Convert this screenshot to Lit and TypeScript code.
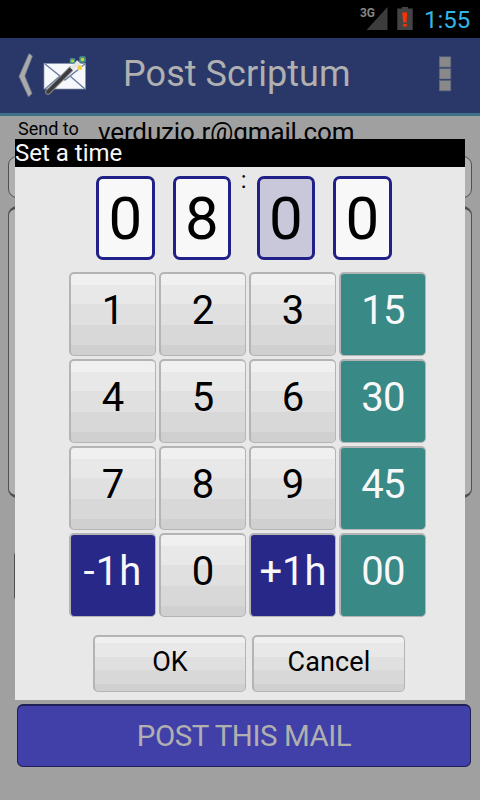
import { LitElement, html, css, svg } from "lit";
import { customElement, property } from "lit/decorators.js";

@customElement("status-bar")
class StatusBar extends LitElement {
  static styles = css`
    :host { display: flex; height: 38px; background: #000; justify-content: flex-end; }
    svg { display: block; width: 60px; height: 38px; }
    .net { font: 700 12.500px Roboto, sans-serif; fill: #868686; }
    .clock { width: 61px; box-sizing: border-box; padding-left: 5px; font: 24px/40px Roboto, sans-serif; color: #33b5e5; }
  `;
  render() {
    return html`
      <svg viewBox="359 0 60 38">
        <path d="M387.500 7V30H366.500Z" fill="#3c3c3c" />
        <text class="net" x="360" y="17" textLength="15" lengthAdjust="spacingAndGlyphs">3G</text>
        <path d="M397.300 8.500H402V7H408V8.500H412.700V30H397.300Z" fill="#444" />
        <path d="M402.300 12.500H407.200L406.400 22.500H403.200ZM403 24H406.700V26.500H403Z" fill="#ff3000" />
      </svg>
      <div class="clock">1:55</div>
    `;
  }
}

@customElement("title-bar")
class TitleBar extends LitElement {
  static styles = css`
    :host { display: flex; align-items: center; box-sizing: border-box; height: 78px; background: #293868; border-bottom: 3px solid #3e7087; padding: 0 28px 0 17px; }
    .logo { width: 74px; height: 60px; margin-top: -1px; flex: none; }
    .title { flex: 1; margin-left: 32px; font: 36px/73px Roboto, sans-serif; height: 75px; color: #b0b0b0; letter-spacing: .06px; white-space: nowrap; }
    .menu { width: 14px; height: 36px; margin-top: -4px; flex: none; }
  `;
  render() {
    return html`
      <svg class="logo" viewBox="17 45 74 60">
        <path d="M29 53.500L32.500 56L24.800 76L32 93.500L28.500 97L19 76.500Z" fill="#aaa" stroke="#6b7590" stroke-width=".7" />
        <rect x="44" y="63.500" width="41.500" height="25.500" fill="#f7f8fb" stroke="#8a94b0" stroke-width=".7" />
        <path d="M45 64L65 80L85 64M45 89L60 76M85 89L70 76" fill="none" stroke="#6b7da3" stroke-width="1.400" />
        <path d="M48 92L71 69" stroke="#8b8b8d" stroke-width="5.600" stroke-linecap="round" />
        <path d="M48 92L71 69" stroke="#3c3c3e" stroke-width="3.800" stroke-linecap="round" />
        <path d="M71.500 69L79 62" stroke="#e7e7e7" stroke-width="5" />
        ${[[72.5, 61, 2.2], [82.5, 59.5, 2.6], [79.8, 67.5, 1.9]].map(
          ([x, y, r], i) => svg`
            <path d="M${x - r} ${y - r}h${2 * r}v${2 * r}h${-2 * r}Z" fill=${i === 2 ? "#f3cb31" : "#348d7d"} stroke=${i === 2 ? "#e8d889" : "#539d9a"} />
            <circle cx=${x} cy=${y} r=${r * 0.7} fill=${i === 2 ? "#f5cf24" : "#c8cf31"} />`
        )}
      </svg>
      <div class="title">Post Scriptum</div>
      <svg class="menu" viewBox="0 0 14 36">
        <g fill="#898989" stroke="#596581" stroke-width=".7">
          <rect x="1.300" y=".8" width="11.500" height="10.300" />
          <rect x="1.300" y="12.700" width="11.500" height="10.300" />
          <rect x="1.300" y="24.600" width="11.500" height="10.300" />
        </g>
      </svg>
    `;
  }
}

@customElement("pad-key")
class PadKey extends LitElement {
  @property() label = "";
  @property({ reflect: true }) tone = "plain";
  static styles = css`
    :host { display: block; box-sizing: border-box; height: 84px; border: 1px solid #b4b4b4; border-width: 2px 1px 1px 2px; border-radius: 5px; text-align: center; font: 40px/74px Roboto, sans-serif; color: #000;
      background: linear-gradient(#f0f0f0 11px, #e8e8e8 11px 30px, #e0e0e0 30px 51px, #d8d8d8 51px 71px, #d0d0d0 71px); }
    :host([tone="teal"]) { background: #398987; color: #f8f8f8; letter-spacing: -.7px; }
    :host([tone="blue"]) { background: #282888; color: #f8f8f8; }
    :host([label="-1h"]) { letter-spacing: 1.100px; }
    :host([tone="action"]) { height: 57px; font-size: 27px; line-height: 50px; letter-spacing: .1px;
      background: linear-gradient(#f0f0f0 6px, #e8e8e8 6px 20px, #e0e0e0 20px 33px, #d8d8d8 33px 47px, #d0d0d0 47px); }
  `;
  render() {
    return html`${this.label}`;
  }
}

@customElement("time-dialog")
class TimeDialog extends LitElement {
  static styles = css`
    :host { display: block; width: 450px; height: 561px; background: #e8e8e8; }
    .caption { height: 28px; background: #000; color: #f8f8f8; font: 24px/28px Roboto, sans-serif; }
    .digits { display: flex; padding: 9px 0 0 81px; height: 96px; box-sizing: border-box; }
    .digit { box-sizing: border-box; width: 58.500px; height: 84px; border: 3px solid #202088; border-radius: 7px; background: #f8f8f8; text-align: center; font: 60px/80px Roboto, sans-serif; color: #000; }
    .digit + .digit { margin-left: 18px; }
    .digit.active { background: #c9c8da; }
    .colon { width: 25.500px; text-align: center; font: 24px/24px Roboto, sans-serif; margin-top: -8px; color: #000; }
    .keys { display: grid; grid-template-columns: repeat(4, 87px); gap: 3px; padding: 9px 0 0 54px; }
    .actions { display: grid; grid-template-columns: repeat(2, 153px); gap: 6px; padding: 18px 0 0 78px; }
  `;
  render() {
    const rows = [["1", "2", "3", "15"], ["4", "5", "6", "30"], ["7", "8", "9", "45"], ["-1h", "0", "+1h", "00"]];
    const tone = (k: string) => (k.endsWith("h") ? "blue" : k.length > 1 ? "teal" : "plain");
    return html`
      <div class="caption">Set a time</div>
      <div class="digits">
        <div class="digit">0</div>
        <div class="digit">8</div>
        <div class="colon">:</div>
        <div class="digit active">0</div>
        <div class="digit">0</div>
      </div>
      <div class="keys">${rows.flat().map((k) => html`<pad-key label=${k} tone=${tone(k)}></pad-key>`)}</div>
      <div class="actions">
        <pad-key label="OK" tone="action"></pad-key>
        <pad-key label="Cancel" tone="action"></pad-key>
      </div>
    `;
  }
}

@customElement("app-root")
class AppRoot extends LitElement {
  static styles = css`
    :host { display: block; position: relative; width: 480px; height: 800px; overflow: hidden; background: #a0a0a0; font-family: Roboto, sans-serif; color: #000; }
    .recipient { display: flex; height: 40px; white-space: nowrap; }
    .label { width: 80px; padding-left: 18px; box-sizing: border-box; font-size: 18px; line-height: 26px; }
    .address { font-size: 26px; line-height: 33px; margin-left: 18px; letter-spacing: -.14px; }
    .field { box-sizing: border-box; margin: 0 8px; border: 1px solid #505050; border-radius: 9px; background: #b0b0b0; }
    .subject { height: 42px; }
    .body { height: 292px; margin-top: 8px; border-width: 3px 1px 3px 1px; }
    .option { width: 60px; height: 50px; margin: 53px 0 0 14px; border-radius: 4px; }
    .post { box-sizing: border-box; width: 454px; height: 63px; margin: 103px 0 0 17px; border: 1px solid #202058; border-top-width: 2px; border-radius: 6px; background: #4140a8; color: #b0b0b0; text-align: center; font-size: 29.500px; line-height: 61px; letter-spacing: -.45px; }
    time-dialog { position: absolute; left: 15px; top: 139px; }
  `;
  render() {
    return html`
      <status-bar></status-bar>
      <title-bar></title-bar>
      <div class="recipient">
        <div class="label">Send to</div>
        <div class="address">verduzio.r@gmail.com</div>
      </div>
      <div class="field subject"></div>
      <div class="field body"></div>
      <div class="field option"></div>
      <div class="post">POST THIS MAIL</div>
      <time-dialog></time-dialog>
    `;
  }
}
